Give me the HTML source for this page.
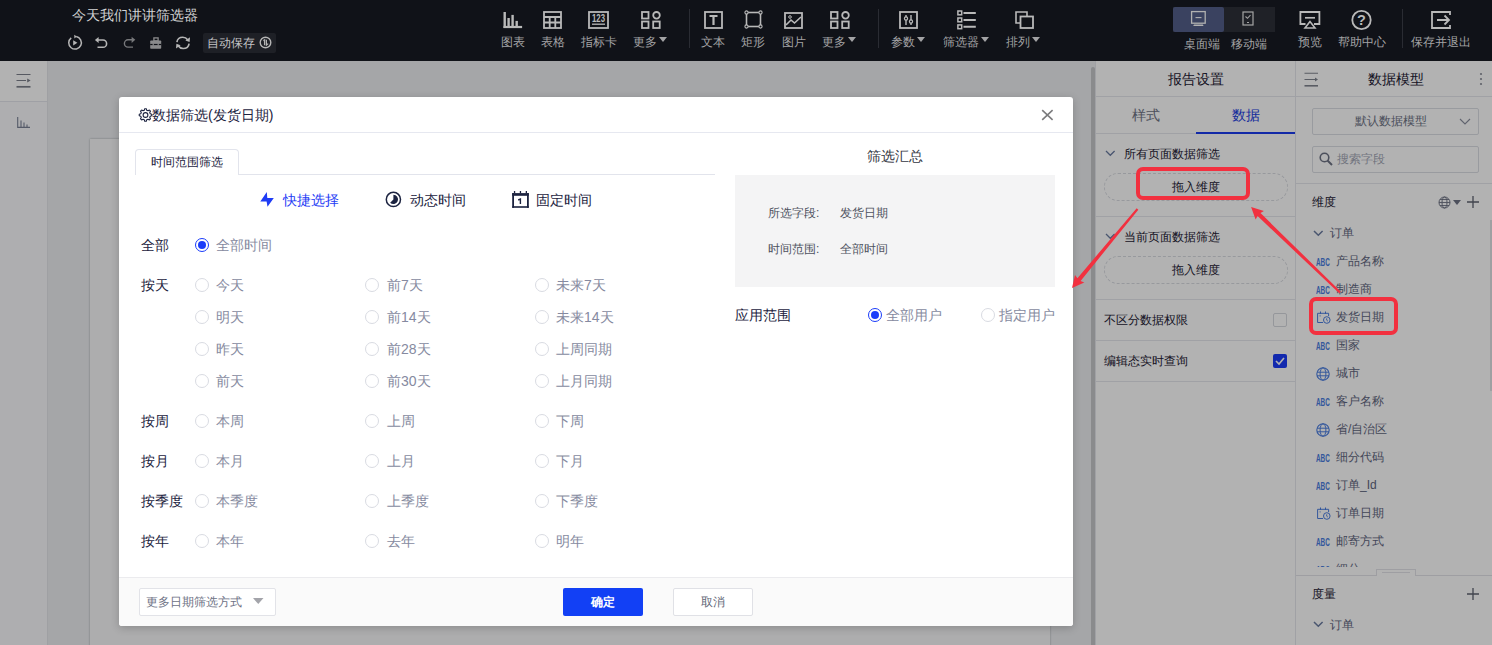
<!DOCTYPE html>
<html><head><meta charset="utf-8">
<style>
*{margin:0;padding:0;box-sizing:border-box;}
html,body{width:1492px;height:645px;overflow:hidden;background:#101218;font-family:"Liberation Sans",sans-serif;}
.a{position:absolute;}
.t{position:absolute;white-space:nowrap;line-height:1;}
svg{position:absolute;overflow:visible;}
#top{left:0;top:0;width:1492px;height:61px;background:#101218;}
.lbl{position:absolute;font-size:12px;color:#a3a3a5;line-height:12px;white-space:nowrap;transform:translateX(-50%);top:35.5px;}
.ic{stroke:#b9b9b9;fill:none;stroke-width:1.6;}
.sep{position:absolute;width:1px;background:#2a2c33;top:9px;height:39px;}
#main{left:0;top:61px;width:1492px;height:584px;}
</style></head><body>
<div id="top" class="a">
  <div class="t" style="left:72px;top:8px;font-size:14px;color:#d2d2d4;line-height:14px;">今天我们讲讲筛选器</div>
  <!-- small icons row -->
  <svg style="left:67px;top:35px" width="16" height="16" viewBox="0 0 16 16"><path d="M9.2 1.6 A6.3 6.3 0 1 1 4.2 2.8" stroke="#b5b5b5" stroke-width="1.5" fill="none"/><path d="M9.8 1.5 L7.2 -0.3 L7.4 3.4Z" fill="#b5b5b5"/><path d="M6.2 5.2 L10.4 7.8 L6.2 10.4Z" fill="#b5b5b5"/></svg>
  <svg style="left:94px;top:35px" width="16" height="16" viewBox="0 0 16 16"><path d="M3.8 5 H9 A3.6 3.65 0 0 1 9 12.3 H3.5" stroke="#b5b5b5" stroke-width="1.6" fill="none"/><path d="M0.9 5 L4.6 1.9 L4.6 8.1Z" fill="#b5b5b5"/></svg>
  <svg style="left:120px;top:35px" width="16" height="16" viewBox="0 0 16 16"><path d="M12.2 4.8 H8 A3.6 3.65 0 0 0 8 12.1 H13" stroke="#77787b" stroke-width="1.4" fill="none"/><path d="M15.3 4.8 L11.6 1.7 L11.6 7.9Z" fill="#77787b"/></svg>
  <svg style="left:150px;top:37px" width="12" height="12" viewBox="0 0 12 12"><rect x="3.9" y="0.9" width="4.2" height="3" stroke="#8a8a8c" stroke-width="1.3" fill="none"/><rect x="0.2" y="3.4" width="11" height="8.3" rx="0.8" fill="#8a8a8c"/><rect x="0.2" y="6.9" width="11" height="1.2" fill="#101218"/><rect x="2.6" y="6.2" width="1.2" height="2.4" fill="#8a8a8c"/><rect x="7.6" y="6.2" width="1.2" height="2.4" fill="#8a8a8c"/></svg>
  <svg style="left:175px;top:36px" width="16" height="14" viewBox="0 0 16 14"><path d="M1.9 6.2 C2.4 2.6 5 1.3 7.8 1.3 C10 1.3 11.6 2.3 12.6 3.8" stroke="#b5b5b5" stroke-width="1.6" fill="none"/><path d="M15 1.2 L14.6 6 L10.4 4.6Z" fill="#b5b5b5"/><path d="M14.1 7.6 C13.6 11.2 11 12.5 8.2 12.5 C6 12.5 4.4 11.5 3.4 10" stroke="#b5b5b5" stroke-width="1.6" fill="none"/><path d="M1 12.6 L1.4 7.8 L5.6 9.2Z" fill="#b5b5b5"/></svg>
  <div class="a" style="left:203px;top:33px;width:73px;height:20px;background:#1e2026;border-radius:2px;"></div>
  <div class="t" style="left:207px;top:37px;font-size:12px;color:#c4c4c6;line-height:12px;">自动保存</div>
  <svg style="left:259px;top:36px" width="13" height="13" viewBox="0 0 13 13"><circle cx="6.5" cy="6.5" r="5.3" stroke="#b5b5b5" stroke-width="1.4" fill="none"/><path d="M4.4 4.6 L5.6 3.9 V9.2" stroke="#b5b5b5" stroke-width="1.3" fill="none"/><path d="M7.4 3.8 V9.1 L9.2 7.6" stroke="#b5b5b5" stroke-width="1.2" fill="none"/></svg>

  <!-- toolbar -->
  <!-- chart -->
  <svg style="left:503px;top:11px" width="20" height="18" viewBox="0 0 20 18"><g fill="#b9b9b9"><rect x="0.5" y="1" width="2.4" height="16"/><rect x="4.4" y="7" width="2.4" height="10"/><rect x="8.4" y="3.9" width="2.4" height="13"/><rect x="12.5" y="9.9" width="2.4" height="7"/><rect x="0.5" y="14.9" width="18.6" height="2.2"/></g></svg>
  <div class="lbl" style="left:513px">图表</div>
  <!-- table -->
  <svg style="left:543px;top:11px" width="19" height="18" viewBox="0 0 19 18"><rect x="1" y="1" width="17" height="16" stroke="#b9b9b9" stroke-width="1.8" fill="none"/><path d="M1 6 H18 M1 11.5 H18 M6.7 6 V17 M12.3 6 V17" stroke="#b9b9b9" stroke-width="1.8"/></svg>
  <div class="lbl" style="left:553px">表格</div>
  <!-- 123 -->
  <svg style="left:588px;top:11px" width="21" height="18" viewBox="0 0 21 18"><rect x="1" y="1" width="19" height="16" stroke="#b9b9b9" stroke-width="1.8" fill="none"/><path d="M4 13.2 H17" stroke="#b9b9b9" stroke-width="1.3"/><text x="4" y="10.7" font-size="10.2" font-weight="bold" fill="#b9b9b9" textLength="13" lengthAdjust="spacingAndGlyphs" font-family="Liberation Sans">123</text></svg>
  <div class="lbl" style="left:599px">指标卡</div>
  <!-- more -->
  <svg style="left:641px;top:11px" width="20" height="18" viewBox="0 0 20 18"><rect x="1" y="1" width="6.5" height="6.5" stroke="#b9b9b9" stroke-width="1.8" fill="none"/><circle cx="15.5" cy="4.3" r="3.3" stroke="#b9b9b9" stroke-width="1.8" fill="none"/><rect x="1" y="10.5" width="6.5" height="6.5" stroke="#b9b9b9" stroke-width="1.8" fill="none"/><rect x="12.2" y="10.5" width="6.5" height="6.5" stroke="#b9b9b9" stroke-width="1.8" fill="none"/></svg>
  <div class="lbl" style="left:650px">更多<span style="display:inline-block;width:0;height:0;border-left:4px solid transparent;border-right:4px solid transparent;border-top:5px solid #a3a3a5;margin-left:2px;vertical-align:top;margin-top:1px;"></span></div>
  <div class="sep" style="left:689px"></div>
  <!-- text -->
  <svg style="left:704px;top:11px" width="19" height="18" viewBox="0 0 19 18"><rect x="1" y="1" width="17" height="16" stroke="#b9b9b9" stroke-width="1.8" fill="none"/><path d="M5.5 5 H13.5 M9.5 5 V14" stroke="#b9b9b9" stroke-width="2.2"/></svg>
  <div class="lbl" style="left:713px">文本</div>
  <!-- rect -->
  <svg style="left:744px;top:10px" width="19" height="19" viewBox="0 0 19 19"><rect x="2.5" y="2.5" width="14" height="14" stroke="#b9b9b9" stroke-width="1.6" fill="none"/><circle cx="2.5" cy="2.5" r="1.6" fill="#101218" stroke="#b9b9b9" stroke-width="1.1"/><circle cx="16.5" cy="2.5" r="1.6" fill="#101218" stroke="#b9b9b9" stroke-width="1.1"/><circle cx="2.5" cy="16.5" r="1.6" fill="#101218" stroke="#b9b9b9" stroke-width="1.1"/><circle cx="16.5" cy="16.5" r="1.6" fill="#101218" stroke="#b9b9b9" stroke-width="1.1"/></svg>
  <div class="lbl" style="left:753px">矩形</div>
  <!-- image -->
  <svg style="left:784px;top:12px" width="19" height="17" viewBox="0 0 19 17"><rect x="1" y="1" width="17" height="15" stroke="#b9b9b9" stroke-width="1.8" fill="none"/><circle cx="6" cy="5" r="1.3" stroke="#b9b9b9" stroke-width="1" fill="none"/><path d="M2 13 L7 8 L10.5 11 L17 5" stroke="#b9b9b9" stroke-width="1.6" fill="none"/></svg>
  <div class="lbl" style="left:794px">图片</div>
  <!-- more -->
  <svg style="left:830px;top:11px" width="20" height="18" viewBox="0 0 20 18"><rect x="1" y="1" width="6.5" height="6.5" stroke="#b9b9b9" stroke-width="1.8" fill="none"/><circle cx="15.5" cy="4.3" r="3.3" stroke="#b9b9b9" stroke-width="1.8" fill="none"/><rect x="1" y="10.5" width="6.5" height="6.5" stroke="#b9b9b9" stroke-width="1.8" fill="none"/><rect x="12.2" y="10.5" width="6.5" height="6.5" stroke="#b9b9b9" stroke-width="1.8" fill="none"/></svg>
  <div class="lbl" style="left:839px">更多<span style="display:inline-block;width:0;height:0;border-left:4px solid transparent;border-right:4px solid transparent;border-top:5px solid #a3a3a5;margin-left:2px;vertical-align:top;margin-top:1px;"></span></div>
  <div class="sep" style="left:878px"></div>
  <!-- params -->
  <svg style="left:899px;top:11px" width="19" height="18" viewBox="0 0 19 18"><rect x="1" y="1" width="17" height="16" stroke="#b9b9b9" stroke-width="1.8" fill="none"/><path d="M7 4 V14 M12 4 V14" stroke="#b9b9b9" stroke-width="1.4"/><circle cx="7" cy="7.5" r="1.6" stroke="#b9b9b9" stroke-width="1.2" fill="#101218"/><circle cx="12" cy="10.5" r="1.6" stroke="#b9b9b9" stroke-width="1.2" fill="#101218"/></svg>
  <div class="lbl" style="left:908px">参数<span style="display:inline-block;width:0;height:0;border-left:4px solid transparent;border-right:4px solid transparent;border-top:5px solid #a3a3a5;margin-left:2px;vertical-align:top;margin-top:1px;"></span></div>
  <!-- filter -->
  <svg style="left:957px;top:11px" width="19" height="18" viewBox="0 0 19 18"><rect x="0.9" y="0" width="3.8" height="3.8" stroke="#b9b9b9" stroke-width="1.5" fill="none"/><rect x="0.9" y="7" width="3.8" height="3.8" stroke="#b9b9b9" stroke-width="1.5" fill="none"/><rect x="0.9" y="13.9" width="3.8" height="3.8" stroke="#b9b9b9" stroke-width="1.5" fill="none"/><path d="M6.5 1.9 H18.8 M6.5 8.9 H18.8 M6.5 15.8 H18.8" stroke="#b9b9b9" stroke-width="2"/></svg>
  <div class="lbl" style="left:966px">筛选器<span style="display:inline-block;width:0;height:0;border-left:4px solid transparent;border-right:4px solid transparent;border-top:5px solid #a3a3a5;margin-left:2px;vertical-align:top;margin-top:1px;"></span></div>
  <!-- arrange -->
  <svg style="left:1015px;top:11px" width="19" height="18" viewBox="0 0 19 18"><path d="M5 12 H1 V1 H12 V5" stroke="#b9b9b9" stroke-width="1.6" fill="none"/><rect x="5.5" y="5.5" width="12.5" height="11.5" stroke="#b9b9b9" stroke-width="1.8" fill="none"/></svg>
  <div class="lbl" style="left:1023px">排列<span style="display:inline-block;width:0;height:0;border-left:4px solid transparent;border-right:4px solid transparent;border-top:5px solid #a3a3a5;margin-left:2px;vertical-align:top;margin-top:1px;"></span></div>

  <!-- device toggle -->
  <div class="a" style="left:1173px;top:7px;width:102px;height:25px;background:#1f2127;"></div>
  <div class="a" style="left:1173px;top:7px;width:51px;height:25px;background:#3a4260;border-radius:2px;"></div>
  <svg style="left:1190px;top:10px" width="17" height="17" viewBox="0 0 17 17"><rect x="1.6" y="1.6" width="13.6" height="11.6" stroke="#b0b0b0" stroke-width="1.3" fill="none"/><path d="M5.5 7.6 H11.5" stroke="#b0b0b0" stroke-width="1.1"/><path d="M4 14.4 H12.8 L13.6 16 H3.2Z" fill="#b0b0b0"/></svg>
  <svg style="left:1242px;top:11px" width="12" height="15" viewBox="0 0 12 15"><rect x="1" y="1" width="10" height="13" stroke="#a5a5a5" stroke-width="1.2" fill="none"/><path d="M3.5 5.5 L5.5 7.3 L8.5 4" stroke="#a5a5a5" stroke-width="1.1" fill="none"/><path d="M5 11.5 H7" stroke="#a5a5a5" stroke-width="1"/></svg>
  <div class="lbl" style="left:1202px;top:38px">桌面端</div>
  <div class="lbl" style="left:1249px;top:38px">移动端</div>
  <!-- preview -->
  <svg style="left:1299px;top:11px" width="22" height="18" viewBox="0 0 22 18"><path d="M6.5 13 H1.4 V1 H20.4 V13 H15" stroke="#b9b9b9" stroke-width="1.8" fill="none"/><path d="M6 6.8 H16" stroke="#b9b9b9" stroke-width="1.7"/><path d="M11 10.6 L6 17 H16Z" stroke="#b9b9b9" stroke-width="1.6" fill="none" stroke-linejoin="miter"/></svg>
  <div class="lbl" style="left:1310px">预览</div>
  <!-- help -->
  <svg style="left:1351px;top:10px" width="22" height="20" viewBox="0 0 22 20"><circle cx="10.5" cy="10" r="9.2" stroke="#b9b9b9" stroke-width="1.8" fill="none"/><text x="10.5" y="15" font-size="14.5" font-weight="bold" fill="#b9b9b9" text-anchor="middle" font-family="Liberation Sans">?</text></svg>
  <div class="lbl" style="left:1362px">帮助中心</div>
  <div class="sep" style="left:1402px"></div>
  <!-- exit -->
  <svg style="left:1431px;top:11px" width="20" height="18" viewBox="0 0 20 18"><path d="M19 4 V1 H1 V17 H19 V14" stroke="#b9b9b9" stroke-width="1.8" fill="none"/><path d="M6 9 H18 M13.5 4.5 L18 9 L13.5 13.5" stroke="#b9b9b9" stroke-width="1.8" fill="none"/></svg>
  <div class="lbl" style="left:1441px">保存并退出</div>
</div>

<div id="main" class="a">
  <!-- left sidebar -->
  <div class="a" style="left:0;top:0;width:48px;height:584px;background:#fafafc;border-right:1px solid #e4e5ea;"></div>
  <div class="a" style="left:0;top:0;width:47px;height:41px;background:#ffffff;border-bottom:1px solid #e4e5ec;"></div>
  <svg style="left:16px;top:12px" width="15" height="15" viewBox="0 0 15 15"><path d="M0.5 1.5 H14.5 M0.5 7.5 H10" stroke="#7c808b" stroke-width="1.1"/><path d="M0.5 13.8 H14.5" stroke="#7c808b" stroke-width="1.7"/><path d="M11.2 5.4 L14.6 7.5 L11.2 9.6Z" fill="#7c808b"/></svg>
  <svg style="left:17px;top:56px" width="13" height="11" viewBox="0 0 13 11"><path d="M0.7 0 V10.4 H13 M4 3.5 V10.4 M7 5.5 V10.4 M10 7.5 V10.4" stroke="#7a8296" stroke-width="1.1" fill="none"/></svg>
  <!-- canvas -->
  <div class="a" style="left:48px;top:0;width:1048px;height:584px;background:#eceef1;"></div>
  <div class="a" style="left:90px;top:78px;width:960px;height:520px;background:#f8f8fa;box-shadow:0 0 2px rgba(0,0,0,0.3);"></div>
  <div class="a" style="left:1091px;top:6px;width:4px;height:600px;background:#c6c7ca;border-radius:2px;"></div>
  <!-- right panel 1 -->
  <div class="a" style="left:1095px;top:0;width:201px;height:584px;background:#fff;border-left:1px solid #e6e7ec;border-right:1px solid #e6e7ec;"></div>
  <div class="t" style="left:1168px;top:11px;font-size:14px;line-height:14px;color:#1d2033;">报告设置</div>
  <div class="a" style="left:1096px;top:35px;width:199px;height:1px;background:#e6e7ec;"></div>
  <div class="t" style="left:1132px;top:47px;font-size:14px;line-height:14px;color:#6e7385;">样式</div>
  <div class="t" style="left:1232px;top:47px;font-size:14px;line-height:14px;color:#2340e0;">数据</div>
  <div class="a" style="left:1096px;top:72px;width:199px;height:1px;background:#e6e7ec;"></div>
  <div class="a" style="left:1196px;top:71px;width:99px;height:2px;background:#1a3cf0;"></div>
  <svg style="left:1105px;top:89px" width="11" height="7" viewBox="0 0 11 7"><path d="M1 1 L5.3 5.3 L9.6 1" stroke="#6a7ba0" stroke-width="1.3" fill="none"/></svg>
  <div class="t" style="left:1124px;top:87px;font-size:12px;line-height:12px;color:#1d2033;">所有页面数据筛选</div>
  <div class="a" style="left:1104px;top:112px;width:184px;height:28px;border:1px dashed #d9dbe1;border-radius:14px;"></div>
  <div class="t" style="left:1172px;top:120px;font-size:12px;line-height:12px;color:#1d2033;">拖入维度</div>
  <div class="a" style="left:1096px;top:155px;width:199px;height:1px;background:#e6e7ec;"></div>
  <svg style="left:1105px;top:172px" width="11" height="7" viewBox="0 0 11 7"><path d="M1 1 L5.3 5.3 L9.6 1" stroke="#6a7ba0" stroke-width="1.3" fill="none"/></svg>
  <div class="t" style="left:1124px;top:170px;font-size:12px;line-height:12px;color:#1d2033;">当前页面数据筛选</div>
  <div class="a" style="left:1104px;top:195px;width:184px;height:28px;border:1px dashed #d9dbe1;border-radius:14px;"></div>
  <div class="t" style="left:1172px;top:203px;font-size:12px;line-height:12px;color:#1d2033;">拖入维度</div>
  <div class="a" style="left:1096px;top:238px;width:199px;height:1px;background:#e6e7ec;"></div>
  <div class="t" style="left:1104px;top:253px;font-size:12px;line-height:12px;color:#1d2033;">不区分数据权限</div>
  <div class="a" style="left:1273px;top:252px;width:14px;height:14px;border:1px solid #d6d8de;border-radius:2px;background:#fff;"></div>
  <div class="a" style="left:1096px;top:279px;width:199px;height:1px;background:#e6e7ec;"></div>
  <div class="t" style="left:1104px;top:294px;font-size:12px;line-height:12px;color:#1d2033;">编辑态实时查询</div>
  <div class="a" style="left:1273px;top:293px;width:14px;height:14px;border-radius:2px;background:#1a3cfa;"></div>
  <svg style="left:1273px;top:293px" width="14" height="14" viewBox="0 0 14 14"><path d="M3 7 L6 10 L11 4" stroke="#fff" stroke-width="1.6" fill="none"/></svg>
  <div class="a" style="left:1096px;top:320px;width:199px;height:1px;background:#e6e7ec;"></div>

  <!-- right panel 2 -->
  <div class="a" style="left:1296px;top:0;width:196px;height:584px;background:#fff;"></div>
  <svg style="left:1304px;top:11px" width="15" height="15" viewBox="0 0 15 15"><path d="M0.5 1.2 H14 M0.5 7.5 H11" stroke="#80848f" stroke-width="1.1"/><path d="M0.5 13.8 H14" stroke="#80848f" stroke-width="1.6"/><path d="M11 5.5 L14 7.5 L11 9.5Z" fill="#80848f"/></svg>
  <div class="t" style="left:1368px;top:11px;font-size:14px;line-height:14px;color:#1d2033;">数据模型</div>
  <svg style="left:1479px;top:11px" width="4" height="14" viewBox="0 0 4 14"><circle cx="2" cy="2" r="1.1" fill="#8a8e99"/><circle cx="2" cy="7" r="1.1" fill="#8a8e99"/><circle cx="2" cy="12" r="1.1" fill="#8a8e99"/></svg>
  <div class="a" style="left:1296px;top:35px;width:196px;height:1px;background:#e6e7ec;"></div>
  <div class="a" style="left:1312px;top:47px;width:167px;height:27px;border:1px solid #dcdee4;border-radius:2px;"></div>
  <div class="t" style="left:1355px;top:54px;font-size:12px;line-height:12px;color:#6e7385;">默认数据模型</div>
  <svg style="left:1459px;top:57px" width="12" height="7" viewBox="0 0 12 7"><path d="M1 1 L6 6 L11 1" stroke="#8a8f9e" stroke-width="1.1" fill="none"/></svg>
  <div class="a" style="left:1312px;top:85px;width:167px;height:27px;border:1px solid #dcdee4;border-radius:2px;"></div>
  <svg style="left:1319px;top:91px" width="14" height="14" viewBox="0 0 14 14"><circle cx="5.5" cy="5.5" r="4.3" stroke="#6e7385" stroke-width="1.6" fill="none"/><path d="M8.5 8.5 L13 13" stroke="#6e7385" stroke-width="1.9"/></svg>
  <div class="t" style="left:1337px;top:92px;font-size:12px;line-height:12px;color:#a4a8b6;">搜索字段</div>
  <div class="a" style="left:1296px;top:122px;width:196px;height:1px;background:#e6e7ec;"></div>
  <div class="t" style="left:1312px;top:135px;font-size:12px;line-height:12px;color:#1d2033;font-weight:500;">维度</div>
  <svg style="left:1438px;top:135px" width="13" height="13" viewBox="0 0 13 13"><circle cx="6.5" cy="6.5" r="5.5" stroke="#6e7385" stroke-width="1" fill="none"/><ellipse cx="6.5" cy="6.5" rx="2.5" ry="5.5" stroke="#6e7385" stroke-width="1" fill="none"/><path d="M1 6.5 H12 M2 3.5 H11 M2 9.5 H11" stroke="#6e7385" stroke-width="0.9"/></svg>
  <svg style="left:1453px;top:139px" width="8" height="5" viewBox="0 0 8 5"><path d="M0 0 H8 L4 5Z" fill="#6e7385"/></svg>
  <svg style="left:1467px;top:135px" width="12" height="12" viewBox="0 0 12 12"><path d="M6 0 V12 M0 6 H12" stroke="#5f6370" stroke-width="1.3"/></svg>
  <div class="a" style="left:0;top:0;width:1492px;height:506px;overflow:hidden;"><svg style="left:1313px;top:169px" width="11" height="7" viewBox="0 0 11 7"><path d="M1 1 L5.3 5.3 L9.6 1" stroke="#6a7ba0" stroke-width="1.5" fill="none"/></svg>
<div class="t" style="left:1330px;top:166px;font-size:12px;line-height:12px;color:#5f6680;">订单</div>
<div class="t" style="left:1316px;top:196.5px;font-size:10px;line-height:10px;color:#4a7de0;font-weight:bold;transform:scaleX(0.64);transform-origin:left;">ABC</div>
<div class="t" style="left:1336px;top:194px;font-size:12px;line-height:12px;color:#5f6680;">产品名称</div>
<div class="t" style="left:1316px;top:224.5px;font-size:10px;line-height:10px;color:#4a7de0;font-weight:bold;transform:scaleX(0.64);transform-origin:left;">ABC</div>
<div class="t" style="left:1336px;top:222px;font-size:12px;line-height:12px;color:#5f6680;">制造商</div>
<svg style="left:1317px;top:250px" width="14" height="13" viewBox="0 0 14 13"><path d="M6 11.5 H0.6 V2.3 H11.6 V5" stroke="#4a7de0" stroke-width="1" fill="none"/><path d="M3.5 0.5 V3 M8.5 0.5 V3" stroke="#4a7de0" stroke-width="1"/><rect x="2.6" y="4.4" width="1" height="1" fill="#4a7de0"/><circle cx="9.8" cy="9" r="3.3" stroke="#4a7de0" stroke-width="1" fill="#fff"/><path d="M9.7 7.3 V9.2 L10.9 10.1" stroke="#4a7de0" stroke-width="0.9" fill="none"/></svg>
<div class="t" style="left:1336px;top:250px;font-size:12px;line-height:12px;color:#5f6680;">发货日期</div>
<div class="t" style="left:1316px;top:280.5px;font-size:10px;line-height:10px;color:#4a7de0;font-weight:bold;transform:scaleX(0.64);transform-origin:left;">ABC</div>
<div class="t" style="left:1336px;top:278px;font-size:12px;line-height:12px;color:#5f6680;">国家</div>
<svg style="left:1316px;top:305.5px" width="14" height="14" viewBox="0 0 14 14"><circle cx="7" cy="7" r="6.2" stroke="#4a7de0" stroke-width="1.1" fill="none"/><ellipse cx="7" cy="7" rx="2.9" ry="6.2" stroke="#4a7de0" stroke-width="1" fill="none"/><path d="M1 5.2 H13 M1 8.8 H13" stroke="#4a7de0" stroke-width="1"/></svg>
<div class="t" style="left:1336px;top:306px;font-size:12px;line-height:12px;color:#5f6680;">城市</div>
<div class="t" style="left:1316px;top:336.5px;font-size:10px;line-height:10px;color:#4a7de0;font-weight:bold;transform:scaleX(0.64);transform-origin:left;">ABC</div>
<div class="t" style="left:1336px;top:334px;font-size:12px;line-height:12px;color:#5f6680;">客户名称</div>
<svg style="left:1316px;top:361.5px" width="14" height="14" viewBox="0 0 14 14"><circle cx="7" cy="7" r="6.2" stroke="#4a7de0" stroke-width="1.1" fill="none"/><ellipse cx="7" cy="7" rx="2.9" ry="6.2" stroke="#4a7de0" stroke-width="1" fill="none"/><path d="M1 5.2 H13 M1 8.8 H13" stroke="#4a7de0" stroke-width="1"/></svg>
<div class="t" style="left:1336px;top:362px;font-size:12px;line-height:12px;color:#5f6680;">省/自治区</div>
<div class="t" style="left:1316px;top:392.5px;font-size:10px;line-height:10px;color:#4a7de0;font-weight:bold;transform:scaleX(0.64);transform-origin:left;">ABC</div>
<div class="t" style="left:1336px;top:390px;font-size:12px;line-height:12px;color:#5f6680;">细分代码</div>
<div class="t" style="left:1316px;top:420.5px;font-size:10px;line-height:10px;color:#4a7de0;font-weight:bold;transform:scaleX(0.64);transform-origin:left;">ABC</div>
<div class="t" style="left:1336px;top:418px;font-size:12px;line-height:12px;color:#5f6680;">订单_Id</div>
<svg style="left:1317px;top:446px" width="14" height="13" viewBox="0 0 14 13"><path d="M6 11.5 H0.6 V2.3 H11.6 V5" stroke="#4a7de0" stroke-width="1" fill="none"/><path d="M3.5 0.5 V3 M8.5 0.5 V3" stroke="#4a7de0" stroke-width="1"/><rect x="2.6" y="4.4" width="1" height="1" fill="#4a7de0"/><circle cx="9.8" cy="9" r="3.3" stroke="#4a7de0" stroke-width="1" fill="#fff"/><path d="M9.7 7.3 V9.2 L10.9 10.1" stroke="#4a7de0" stroke-width="0.9" fill="none"/></svg>
<div class="t" style="left:1336px;top:446px;font-size:12px;line-height:12px;color:#5f6680;">订单日期</div>
<div class="t" style="left:1316px;top:476.5px;font-size:10px;line-height:10px;color:#4a7de0;font-weight:bold;transform:scaleX(0.64);transform-origin:left;">ABC</div>
<div class="t" style="left:1336px;top:474px;font-size:12px;line-height:12px;color:#5f6680;">邮寄方式</div>
<div class="t" style="left:1316px;top:504.5px;font-size:10px;line-height:10px;color:#4a7de0;font-weight:bold;transform:scaleX(0.64);transform-origin:left;">ABC</div>
<div class="t" style="left:1336px;top:502px;font-size:12px;line-height:12px;color:#5f6680;">细分</div></div>
  <div class="a" style="left:1296px;top:514px;width:196px;height:1px;background:#e2e3e8;"></div>
  <div class="a" style="left:1376px;top:508px;width:40px;height:7px;border:1px solid #e2e3e8;border-bottom:none;background:#fff;"></div>
  <div class="a" style="left:1382px;top:511px;width:28px;height:1px;background:#e2e3e8;"></div>
  <div class="t" style="left:1312px;top:527px;font-size:12px;line-height:12px;color:#1d2033;font-weight:500;">度量</div>
  <svg style="left:1467px;top:527px" width="12" height="12" viewBox="0 0 12 12"><path d="M6 0 V12 M0 6 H12" stroke="#5f6370" stroke-width="1.3"/></svg>
  <svg style="left:1313px;top:560px" width="11" height="7" viewBox="0 0 11 7"><path d="M1 1 L5.3 5.3 L9.6 1" stroke="#6a7ba0" stroke-width="1.5" fill="none"/></svg>
  <div class="t" style="left:1330px;top:558px;font-size:12px;line-height:12px;color:#5f6680;">订单</div>

  <div class="a" style="left:1490px;top:159px;width:2px;height:171px;background:#e4e5e8;"></div>
  <!-- overlay -->
  <div class="a" style="left:0;top:0;width:1492px;height:584px;background:rgba(0,0,0,0.3);"></div>
</div>

<div class="a" style="left:119px;top:97px;width:954px;height:529px;background:#fff;border-radius:3px;box-shadow:0 2px 8px rgba(0,0,0,0.2);overflow:hidden;">
<div class="a" style="left:0;top:35px;width:954px;height:1px;background:#e6e8f0;"></div>
<div class="a" style="left:0;top:480px;width:954px;height:49px;background:#fafafa;border-top:1px solid #ebebee;"></div>
</div>
<svg style="left:139px;top:108px" width="13" height="14" viewBox="0 0 13 14"><path d="M12.75 6.21 L12.75 7.79 L11.25 8.22 L10.72 9.49 L11.48 10.86 L10.36 11.98 L8.99 11.22 L7.72 11.75 L7.29 13.25 L5.71 13.25 L5.28 11.75 L4.01 11.22 L2.64 11.98 L1.52 10.86 L2.28 9.49 L1.75 8.22 L0.25 7.79 L0.25 6.21 L1.75 5.78 L2.28 4.51 L1.52 3.14 L2.64 2.02 L4.01 2.78 L5.28 2.25 L5.71 0.75 L7.29 0.75 L7.72 2.25 L8.99 2.78 L10.36 2.02 L11.48 3.14 L10.72 4.51 L11.25 5.78Z" stroke="#1c2340" stroke-width="1.1" fill="none" stroke-linejoin="round"/><circle cx="6.5" cy="7" r="2.4" stroke="#1c2340" stroke-width="1.1" fill="none"/></svg>
<div class="t" style="left:152px;top:108px;font-size:14px;line-height:14px;color:#1c2340;">数据筛选(发货日期)</div>
<svg style="left:1041px;top:109px" width="13" height="12" viewBox="0 0 13 12"><path d="M1.2 1.2 L11.6 10.8 M11.6 1.2 L1.2 10.8" stroke="#7b7b7d" stroke-width="1.6"/></svg>
<div class="a" style="left:135px;top:149px;width:104px;height:26px;border:1px solid #e2e4ec;border-bottom:none;border-radius:4px 4px 0 0;background:#fff;"></div>
<div class="a" style="left:239px;top:174px;width:476px;height:1px;background:#e2e4ec;"></div>
<div class="t" style="left:151px;top:156px;font-size:12px;line-height:12px;color:#1c2340;">时间范围筛选</div>
<svg style="left:259px;top:191px" width="16" height="17" viewBox="0 0 16 17"><path d="M7.8 0.9 L1.3 10.4 L7.6 10.4 L8.5 15.7 L14.8 7 L8.3 7 Z" fill="#1f3cf5"/></svg>
<div class="t" style="left:283px;top:193px;font-size:14px;line-height:14px;color:#1f3cf5;">快捷选择</div>
<svg style="left:385px;top:191px" width="17" height="17" viewBox="0 0 17 17"><circle cx="8.4" cy="8.4" r="7.1" stroke="#1c2340" stroke-width="1.5" fill="none"/><path d="M8.4 8.4 V3.8 A4.6 4.6 0 1 1 5.15 11.65 Z" fill="#1c2340"/></svg>
<div class="t" style="left:410px;top:193px;font-size:14px;line-height:14px;color:#1c2340;">动态时间</div>
<svg style="left:512px;top:190px" width="17" height="18" viewBox="0 0 17 18"><g fill="#1c2340"><rect x="0.2" y="3.1" width="16.6" height="2.7"/><rect x="0.2" y="3.1" width="1.8" height="14.7"/><rect x="15" y="3.1" width="1.8" height="14.7"/><rect x="0.2" y="16.2" width="16.6" height="1.6"/><rect x="1.9" y="1" width="1.3" height="2.3"/><rect x="7.8" y="1" width="1.3" height="2.3"/><rect x="13.7" y="1" width="1.3" height="2.3"/></g><path d="M6.2 10 L8.4 9.1 V13.9" stroke="#1c2340" stroke-width="1.4" fill="none"/></svg>
<div class="t" style="left:536px;top:193px;font-size:14px;line-height:14px;color:#1c2340;">固定时间</div>
<div class="t" style="left:141px;top:238px;font-size:14px;line-height:14px;color:#1c2340;">全部</div>
<div class="a" style="left:195px;top:238px;width:14px;height:14px;border-radius:50%;border:1px solid #1a3cfa;background:#fff;"></div><div class="a" style="left:198px;top:241px;width:8px;height:8px;border-radius:50%;background:#1a3cfa;"></div>
<div class="t" style="left:216px;top:238px;font-size:14px;line-height:14px;color:#868aa0;">全部时间</div>
<div class="t" style="left:141px;top:278px;font-size:14px;line-height:14px;color:#1c2340;">按天</div>
<div class="a" style="left:195px;top:278px;width:14px;height:14px;border-radius:50%;border:1px solid #d9dbe2;background:#fff;"></div>
<div class="t" style="left:216px;top:278px;font-size:14px;line-height:14px;color:#868aa0;">今天</div>
<div class="a" style="left:365px;top:278px;width:14px;height:14px;border-radius:50%;border:1px solid #d9dbe2;background:#fff;"></div>
<div class="t" style="left:387px;top:278px;font-size:14px;line-height:14px;color:#868aa0;">前7天</div>
<div class="a" style="left:535px;top:278px;width:14px;height:14px;border-radius:50%;border:1px solid #d9dbe2;background:#fff;"></div>
<div class="t" style="left:556px;top:278px;font-size:14px;line-height:14px;color:#868aa0;">未来7天</div>
<div class="a" style="left:195px;top:310px;width:14px;height:14px;border-radius:50%;border:1px solid #d9dbe2;background:#fff;"></div>
<div class="t" style="left:216px;top:310px;font-size:14px;line-height:14px;color:#868aa0;">明天</div>
<div class="a" style="left:365px;top:310px;width:14px;height:14px;border-radius:50%;border:1px solid #d9dbe2;background:#fff;"></div>
<div class="t" style="left:387px;top:310px;font-size:14px;line-height:14px;color:#868aa0;">前14天</div>
<div class="a" style="left:535px;top:310px;width:14px;height:14px;border-radius:50%;border:1px solid #d9dbe2;background:#fff;"></div>
<div class="t" style="left:556px;top:310px;font-size:14px;line-height:14px;color:#868aa0;">未来14天</div>
<div class="a" style="left:195px;top:342px;width:14px;height:14px;border-radius:50%;border:1px solid #d9dbe2;background:#fff;"></div>
<div class="t" style="left:216px;top:342px;font-size:14px;line-height:14px;color:#868aa0;">昨天</div>
<div class="a" style="left:365px;top:342px;width:14px;height:14px;border-radius:50%;border:1px solid #d9dbe2;background:#fff;"></div>
<div class="t" style="left:387px;top:342px;font-size:14px;line-height:14px;color:#868aa0;">前28天</div>
<div class="a" style="left:535px;top:342px;width:14px;height:14px;border-radius:50%;border:1px solid #d9dbe2;background:#fff;"></div>
<div class="t" style="left:556px;top:342px;font-size:14px;line-height:14px;color:#868aa0;">上周同期</div>
<div class="a" style="left:195px;top:374px;width:14px;height:14px;border-radius:50%;border:1px solid #d9dbe2;background:#fff;"></div>
<div class="t" style="left:216px;top:374px;font-size:14px;line-height:14px;color:#868aa0;">前天</div>
<div class="a" style="left:365px;top:374px;width:14px;height:14px;border-radius:50%;border:1px solid #d9dbe2;background:#fff;"></div>
<div class="t" style="left:387px;top:374px;font-size:14px;line-height:14px;color:#868aa0;">前30天</div>
<div class="a" style="left:535px;top:374px;width:14px;height:14px;border-radius:50%;border:1px solid #d9dbe2;background:#fff;"></div>
<div class="t" style="left:556px;top:374px;font-size:14px;line-height:14px;color:#868aa0;">上月同期</div>
<div class="t" style="left:141px;top:414px;font-size:14px;line-height:14px;color:#1c2340;">按周</div>
<div class="a" style="left:195px;top:414px;width:14px;height:14px;border-radius:50%;border:1px solid #d9dbe2;background:#fff;"></div>
<div class="t" style="left:216px;top:414px;font-size:14px;line-height:14px;color:#868aa0;">本周</div>
<div class="a" style="left:365px;top:414px;width:14px;height:14px;border-radius:50%;border:1px solid #d9dbe2;background:#fff;"></div>
<div class="t" style="left:387px;top:414px;font-size:14px;line-height:14px;color:#868aa0;">上周</div>
<div class="a" style="left:535px;top:414px;width:14px;height:14px;border-radius:50%;border:1px solid #d9dbe2;background:#fff;"></div>
<div class="t" style="left:556px;top:414px;font-size:14px;line-height:14px;color:#868aa0;">下周</div>
<div class="t" style="left:141px;top:454px;font-size:14px;line-height:14px;color:#1c2340;">按月</div>
<div class="a" style="left:195px;top:454px;width:14px;height:14px;border-radius:50%;border:1px solid #d9dbe2;background:#fff;"></div>
<div class="t" style="left:216px;top:454px;font-size:14px;line-height:14px;color:#868aa0;">本月</div>
<div class="a" style="left:365px;top:454px;width:14px;height:14px;border-radius:50%;border:1px solid #d9dbe2;background:#fff;"></div>
<div class="t" style="left:387px;top:454px;font-size:14px;line-height:14px;color:#868aa0;">上月</div>
<div class="a" style="left:535px;top:454px;width:14px;height:14px;border-radius:50%;border:1px solid #d9dbe2;background:#fff;"></div>
<div class="t" style="left:556px;top:454px;font-size:14px;line-height:14px;color:#868aa0;">下月</div>
<div class="t" style="left:141px;top:494px;font-size:14px;line-height:14px;color:#1c2340;">按季度</div>
<div class="a" style="left:195px;top:494px;width:14px;height:14px;border-radius:50%;border:1px solid #d9dbe2;background:#fff;"></div>
<div class="t" style="left:216px;top:494px;font-size:14px;line-height:14px;color:#868aa0;">本季度</div>
<div class="a" style="left:365px;top:494px;width:14px;height:14px;border-radius:50%;border:1px solid #d9dbe2;background:#fff;"></div>
<div class="t" style="left:387px;top:494px;font-size:14px;line-height:14px;color:#868aa0;">上季度</div>
<div class="a" style="left:535px;top:494px;width:14px;height:14px;border-radius:50%;border:1px solid #d9dbe2;background:#fff;"></div>
<div class="t" style="left:556px;top:494px;font-size:14px;line-height:14px;color:#868aa0;">下季度</div>
<div class="t" style="left:141px;top:534px;font-size:14px;line-height:14px;color:#1c2340;">按年</div>
<div class="a" style="left:195px;top:534px;width:14px;height:14px;border-radius:50%;border:1px solid #d9dbe2;background:#fff;"></div>
<div class="t" style="left:216px;top:534px;font-size:14px;line-height:14px;color:#868aa0;">本年</div>
<div class="a" style="left:365px;top:534px;width:14px;height:14px;border-radius:50%;border:1px solid #d9dbe2;background:#fff;"></div>
<div class="t" style="left:387px;top:534px;font-size:14px;line-height:14px;color:#868aa0;">去年</div>
<div class="a" style="left:535px;top:534px;width:14px;height:14px;border-radius:50%;border:1px solid #d9dbe2;background:#fff;"></div>
<div class="t" style="left:556px;top:534px;font-size:14px;line-height:14px;color:#868aa0;">明年</div>
<div class="t" style="left:867px;top:149px;font-size:14px;line-height:14px;color:#333642;">筛选汇总</div>
<div class="a" style="left:735px;top:175px;width:320px;height:112px;background:#f4f4f5;"></div>
<div class="t" style="left:768px;top:207px;font-size:12px;line-height:12px;color:#4e5260;">所选字段:</div>
<div class="t" style="left:840px;top:207px;font-size:12px;line-height:12px;color:#4e5260;">发货日期</div>
<div class="t" style="left:768px;top:243px;font-size:12px;line-height:12px;color:#4e5260;">时间范围:</div>
<div class="t" style="left:840px;top:243px;font-size:12px;line-height:12px;color:#4e5260;">全部时间</div>
<div class="t" style="left:735px;top:308px;font-size:14px;line-height:14px;color:#1c2340;">应用范围</div>
<div class="a" style="left:868px;top:308px;width:14px;height:14px;border-radius:50%;border:1px solid #1a3cfa;background:#fff;"></div><div class="a" style="left:871px;top:311px;width:8px;height:8px;border-radius:50%;background:#1a3cfa;"></div>
<div class="t" style="left:886px;top:308px;font-size:14px;line-height:14px;color:#868aa0;">全部用户</div>
<div class="a" style="left:981px;top:308px;width:14px;height:14px;border-radius:50%;border:1px solid #d9dbe2;background:#fff;"></div>
<div class="t" style="left:999px;top:308px;font-size:14px;line-height:14px;color:#868aa0;">指定用户</div>
<div class="a" style="left:139px;top:588px;width:137px;height:28px;border:1px solid #e2e3e8;background:#fff;border-radius:2px;"></div>
<div class="t" style="left:146px;top:595.5px;font-size:12px;line-height:12px;color:#6e7285;">更多日期筛选方式</div>
<svg style="left:253px;top:598px" width="11" height="7" viewBox="0 0 11 7"><path d="M0 0 H10.5 L5.25 6Z" fill="#a3a4aa"/></svg>
<div class="a" style="left:563px;top:588px;width:80px;height:28px;background:#1240f5;border-radius:2px;"></div>
<div class="t" style="left:563px;top:596px;width:80px;text-align:center;font-size:12px;line-height:12px;color:#fff;font-weight:bold;">确定</div>
<div class="a" style="left:673px;top:588px;width:80px;height:28px;border:1px solid #e0e1e6;background:#fff;border-radius:2px;"></div>
<div class="t" style="left:673px;top:596px;width:80px;text-align:center;font-size:12px;line-height:12px;color:#646878;">取消</div>
<div class="a" style="left:1136px;top:167px;width:114px;height:33px;border:4px solid #f2303f;border-radius:7px;"></div>
<div class="a" style="left:1309px;top:297px;width:89px;height:38px;border:4px solid #f2303f;border-radius:7px;"></div>
<svg style="left:0;top:0" width="1492" height="645" viewBox="0 0 1492 645"><path d="M1136.7 208.3 L1077.4 278.2 L1075.0 274.9 L1072.0 288.0 L1084.3 282.6 L1080.6 280.9 L1138.3 209.7Z" fill="#f2303f"/><path d="M1340.8 291.7 L1260.5 213.1 L1263.9 211.0 L1251.1 207.0 L1255.6 219.6 L1257.6 216.1 L1339.2 293.3Z" fill="#f2303f"/></svg>
</body></html>
